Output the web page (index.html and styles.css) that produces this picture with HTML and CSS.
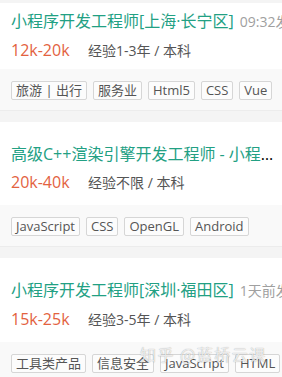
FILE: index.html
```html
<!DOCTYPE html>
<html lang="zh-CN">
<head>
    <meta charset="UTF-8">
    <meta name="viewport" content="width=device-width, initial-scale=1.0">
    <title>职位列表</title>
    <link rel="stylesheet" href="styles.css">
</head>
<body>
    <div class="job-list">
        <div class="job-card">
            <div class="job-main first">
                <div class="job-title">
                    <span class="job-name">小程序开发工程师[上海·长宁区]</span>
                    <span class="job-time">09:32发布</span>
                </div>
                <div class="job-info">
                    <span class="salary">12k-20k</span>
                    <span class="require">经验1-3年 / 本科</span>
                </div>
            </div>
            <div class="job-tags">
                <span class="tag">旅游 | 出行</span>
                <span class="tag">服务业</span>
                <span class="tag">Html5</span>
                <span class="tag">CSS</span>
                <span class="tag">Vue</span>
            </div>
        </div>

        <div class="job-card">
            <div class="job-main">
                <div class="job-title ellipsis">
                    <span class="job-name">高级C++渲染引擎开发工程师 - 小程序方向[北京·海淀区]</span>
                </div>
                <div class="job-info">
                    <span class="salary">20k-40k</span>
                    <span class="require">经验不限 / 本科</span>
                </div>
            </div>
            <div class="job-tags">
                <span class="tag">JavaScript</span>
                <span class="tag">CSS</span>
                <span class="tag">OpenGL</span>
                <span class="tag">Android</span>
            </div>
        </div>

        <div class="job-card">
            <div class="job-main">
                <div class="job-title">
                    <span class="job-name">小程序开发工程师[深圳·福田区]</span>
                    <span class="job-time">1天前发布</span>
                </div>
                <div class="job-info">
                    <span class="salary">15k-25k</span>
                    <span class="require">经验3-5年 / 本科</span>
                </div>
            </div>
            <div class="job-tags">
                <span class="tag">工具类产品</span>
                <span class="tag">信息安全</span>
                <span class="tag">JavaScript</span>
                <span class="tag">HTML</span>
            </div>
        </div>
    </div>

    <div class="watermark">知乎 @蓝桥云课</div>
</body>
</html>
```

FILE: styles.css
```css
body {
    margin: 0;
    width: 282px;
    height: 377px;
    overflow: hidden;
    position: relative;
    background-color: #f4f4f4;
    font-family: "Open Sans", "Noto Sans CJK SC", sans-serif;
}
.job-list {
    padding-top: 3px;
}
.job-card {
    margin-bottom: 11px;
    background-color: white;
}
.job-main {
    padding: 20px 0 12px 11px;
}
.job-main.first {
    padding-top: 6px;
    padding-bottom: 8px;
}
.job-title {
    font-size: 16px;
    line-height: 24px;
    white-space: nowrap;
    overflow: hidden;
}
.job-title.ellipsis {
    text-overflow: ellipsis;
}
.job-name {
    color: #22a083;
}
.job-time {
    margin-left: 2px;
    font-size: 14px;
    color: #a0a0a0;
}
.job-info {
    display: flex;
    align-items: baseline;
    margin-top: 5px;
    height: 22px;
    line-height: 22px;
}
.salary {
    width: 77px;
    font-size: 16px;
    color: #e3623f;
}
.require {
    font-size: 14px;
    color: #555;
}
.job-tags {
    display: flex;
    align-items: flex-start;
    gap: 6px;
    height: 19px;
    padding: 12px 11px 10px;
    background-color: #f9f9f9;
    border-bottom: 1px solid #ececec;
    white-space: nowrap;
}
.tag {
    height: 17px;
    padding: 0 4px;
    font-size: 13px;
    line-height: 17px;
    color: #555;
    background-color: #fcfcfc;
    border: 1px solid #d6d6d6;
    border-radius: 2px;
}
.watermark {
    position: absolute;
    left: 140px;
    top: 342px;
    font-family: "Noto Sans CJK SC", sans-serif;
    font-size: 16px;
    color: rgba(255, 255, 255, 0.8);
    text-shadow: 0 0 1px rgba(0, 0, 0, 0.4);
    letter-spacing: 1.5px;
}
```
